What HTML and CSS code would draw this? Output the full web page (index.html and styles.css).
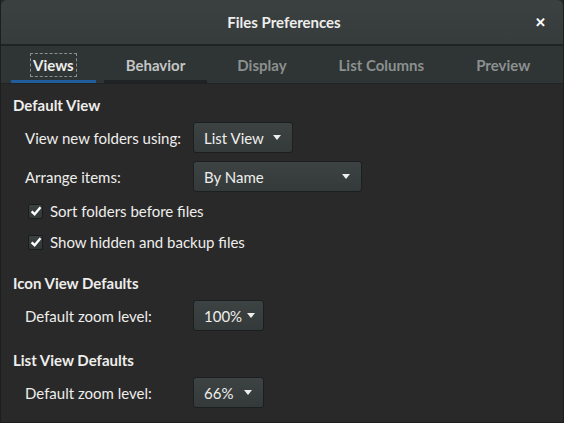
FILE: index.html
```html
<!DOCTYPE html>
<html>
<head>
<meta charset="utf-8">
<link rel="stylesheet" href="styles.css">
</head>
<body>
<div class="window">
  <header class="titlebar">
    <span class="spacer"></span>
    <span class="title">Files Preferences</span>
    <span class="close-wrap"><span class="close">✕</span></span>
  </header>
  <nav class="tabs">
    <div class="tab active"><span class="focus">Views</span></div>
    <div class="tab hover"><span>Behavior</span></div>
    <div class="tab"><span>Display</span></div>
    <div class="tab"><span>List Columns</span></div>
    <div class="tab"><span>Preview</span></div>
  </nav>
  <main class="content">
    <h2 class="heading first">Default View</h2>
    <div class="row">
      <span class="label">View new folders using:</span>
      <div class="combo w-list"><span>List View</span><span class="arrow"></span></div>
    </div>
    <div class="row">
      <span class="label">Arrange items:</span>
      <div class="combo w-name"><span>By Name</span><span class="arrow"></span></div>
    </div>
    <div class="check-row first-check">
      <span class="checkbox"><svg width="12" height="12" viewBox="0 0 12 12"><path d="M1.6 6.3 L4.6 9.2 L10.5 2.3" fill="none" stroke="#ffffff" stroke-width="2.4"/></svg></span>
      <span class="check-label">Sort folders before files</span>
    </div>
    <div class="check-row">
      <span class="checkbox"><svg width="12" height="12" viewBox="0 0 12 12"><path d="M1.6 6.3 L4.6 9.2 L10.5 2.3" fill="none" stroke="#ffffff" stroke-width="2.4"/></svg></span>
      <span class="check-label">Show hidden and backup files</span>
    </div>
    <h2 class="heading">Icon View Defaults</h2>
    <div class="row">
      <span class="label">Default zoom level:</span>
      <div class="combo w-zoom"><span>100%</span><span class="arrow"></span></div>
    </div>
    <h2 class="heading">List View Defaults</h2>
    <div class="row">
      <span class="label">Default zoom level:</span>
      <div class="combo w-zoom"><span>66%</span><span class="arrow"></span></div>
    </div>
  </main>
</div>
</body>
</html>
```

FILE: styles.css
```css
* { box-sizing: border-box; }
html, body {
  margin: 0;
  padding: 0;
  background: #1c1f1f;
}
body {
  font-family: Lato, "Noto Sans", sans-serif;
  font-size: 15px;
  color: #eeeeec;
}
.window {
  width: 564px;
  height: 423px;
  display: flex;
  flex-direction: column;
  border: 1px solid #1c1f1f;
  border-top: none;
  background: #292929;
  overflow: hidden;
}
.titlebar {
  height: 46px;
  flex: none;
  display: grid;
  grid-template-columns: 1fr auto 1fr;
  align-items: center;
  background: linear-gradient(#3b4141, #363c3c);
  border-bottom: 2px solid #1f2323;
  border-radius: 6px 6px 0 0;
}
.title {
  font-weight: bold;
  font-size: 15px;
  color: #eeeeec;
  padding-left: 4px;
}
.close-wrap {
  display: flex;
  justify-content: flex-end;
  padding-right: 17px;
}
.close {
  font-size: 13px;
  font-weight: bold;
  color: #ffffff;
  line-height: 1;
}
.tabs {
  height: 38px;
  flex: none;
  display: flex;
  gap: 8px;
  padding: 0 0 0 10px;
  background: #2f3434;
  border-bottom: 1px solid #1f2323;
}
.tab {
  flex: none;
  display: flex;
  align-items: center;
  justify-content: center;
  padding: 4px 22px 0 22px;
  font-weight: bold;
  font-size: 15px;
  color: #8b9090;
  border-bottom: 3px solid transparent;
}
.tab.active {
  color: #eeeeec;
  border-bottom-color: #215d9c;
}
.tab.hover {
  color: #c4c6c5;
  border-bottom-color: #1f2323;
}
.focus {
  outline: 1px dashed #8a8f8f;
  outline-offset: 2px;
}
.content {
  flex: 1;
  padding: 11px 0 0 12px;
}
.heading {
  margin: 19px 0 0 0;
  font-size: 15px;
  font-weight: bold;
  line-height: 20px;
  height: 20px;
}
.heading.first { margin-top: 0; }
.row {
  display: grid;
  grid-template-columns: 168px auto;
  align-items: center;
  margin-top: 8px;
  padding-left: 12px;
  height: 31px;
}
.heading + .row { margin-top: 7px; }
.label {
  color: #eeeeec;
}
.combo {
  height: 31px;
  display: flex;
  align-items: center;
  justify-content: space-between;
  gap: 5px;
  padding: 0 11px 0 10px;
  border: 1px solid #1c1f1f;
  border-radius: 3px;
  background: linear-gradient(#3d4343, #343939);
  color: #eeeeec;
}
.w-list { width: 100px; }
.w-name { width: 169px; }
.w-zoom { width: 71px; }
.arrow {
  flex: none;
  width: 0;
  height: 0;
  border-left: 4.5px solid transparent;
  border-right: 4.5px solid transparent;
  border-top: 5px solid #eeeeec;
}
.check-row {
  display: flex;
  align-items: center;
  gap: 7px;
  height: 24px;
  margin-top: 7px;
  padding-left: 15px;
}
.checkbox {
  width: 15px;
  height: 15px;
  border: 1px solid #1a1d1d;
  border-radius: 2px;
  background: linear-gradient(#3b4040, #323737);
  display: flex;
  align-items: center;
  justify-content: center;
}
.checkbox svg { display: block; }
```
